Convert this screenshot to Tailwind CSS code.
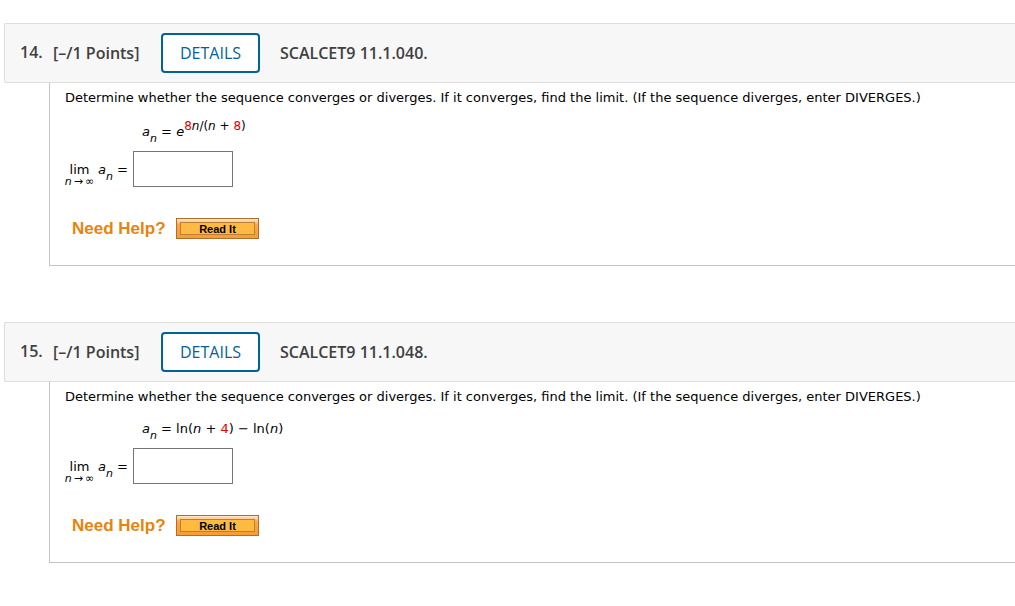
<!DOCTYPE html>
<html lang="en">
<head>
  <meta charset="UTF-8">
  <meta name="viewport" content="width=device-width, initial-scale=1.0">
  <title>Homework 11.1</title>
  <script src="https://cdn.jsdelivr.net/npm/@tailwindcss/browser@4"></script>
</head>
<body class="bg-white text-black font-['DejaVu_Sans',sans-serif] text-[13px] leading-5 pt-[23px] pl-1 flex flex-col gap-14 overflow-x-hidden">

  <!-- Question 14 -->
  <section>
    <header class="flex items-center h-[60px] pl-[15px] bg-[#f7f7f7] border border-r-0 border-[#dddddd] rounded-l-xs font-['Open_Sans',sans-serif] text-base font-semibold text-[#404040]">
      <span class="w-[33px] pb-0.5">14.</span>
      <span class="w-[108px]">[–/1 Points]</span>
      <button type="button" class="w-[99px] h-10 mr-5 bg-white border-2 border-[#006298] rounded text-[#006298] font-normal">DETAILS</button>
      <h2>SCALCET9 11.1.040.</h2>
    </header>

    <div class="ml-[45px] pl-[15px] pt-[5px] pb-[26px] border-l border-b border-[#c4c4c4]">
      <p>Determine whether the sequence converges or diverges. If it converges, find the limit. (If the sequence diverges, enter DIVERGES.)</p>

      <p class="pl-[77px] pt-3 pb-1"><i>a</i><span class="inline-block align-[-6px] leading-4 text-[11px] italic">n</span> = <i>e</i><span class="inline-block align-[6px] leading-3 text-xs"><span class="text-[#dd0000]">8</span><i>n</i>/(<i>n</i> + <span class="text-[#dd0000]">8</span>)</span></p>

      <div class="flex items-center h-9">
        <label for="answer14" class="flex items-center w-[68px] pt-1.5">
          <span class="flex flex-col items-center w-[29px] mr-1 pt-2 leading-3"><span>lim</span><span class="flex gap-0.5 text-[11px]"><i>n</i><span>→</span><span>∞</span></span></span>
          <span><i>a</i><span class="inline-block align-[-6px] leading-4 text-[11px] italic">n</span> =</span>
        </label>
        <input id="answer14" type="text" class="w-[100px] h-9 px-2 border border-[#767676]">
      </div>

      <div class="flex items-center mt-[31px] pl-[7px] font-['Liberation_Sans',sans-serif] font-bold">
        <span class="w-[104px] text-[17px] leading-5 text-[#e8830c]">Need Help?</span>
        <button type="button" class="w-[83px] h-[21px] p-[3px] border border-[#ae6f2a] bg-linear-to-b from-[#ffe8d2] via-[#ffa548] via-30% to-[#f99a35] text-[11px]">
          <span class="block h-full border border-[#bd8033] bg-[#ffba42] leading-3">Read It</span>
        </button>
      </div>
    </div>
  </section>

  <!-- Question 15 -->
  <section>
    <header class="flex items-center h-[60px] pl-[15px] bg-[#f7f7f7] border border-r-0 border-[#dddddd] rounded-l-xs font-['Open_Sans',sans-serif] text-base font-semibold text-[#404040]">
      <span class="w-[33px] pb-0.5">15.</span>
      <span class="w-[108px]">[–/1 Points]</span>
      <button type="button" class="w-[99px] h-10 mr-5 bg-white border-2 border-[#006298] rounded text-[#006298] font-normal">DETAILS</button>
      <h2>SCALCET9 11.1.048.</h2>
    </header>

    <div class="ml-[45px] pl-[15px] pt-[5px] pb-[26px] border-l border-b border-[#c4c4c4]">
      <p>Determine whether the sequence converges or diverges. If it converges, find the limit. (If the sequence diverges, enter DIVERGES.)</p>

      <p class="pl-[77px] pt-3 pb-1"><i>a</i><span class="inline-block align-[-6px] leading-4 text-[11px] italic">n</span> = ln(<i>n</i> + <span class="text-[#dd0000]">4</span>) − ln(<i>n</i>)</p>

      <div class="flex items-center h-9">
        <label for="answer15" class="flex items-center w-[68px] pt-1.5">
          <span class="flex flex-col items-center w-[29px] mr-1 pt-2 leading-3"><span>lim</span><span class="flex gap-0.5 text-[11px]"><i>n</i><span>→</span><span>∞</span></span></span>
          <span><i>a</i><span class="inline-block align-[-6px] leading-4 text-[11px] italic">n</span> =</span>
        </label>
        <input id="answer15" type="text" class="w-[100px] h-9 px-2 border border-[#767676]">
      </div>

      <div class="flex items-center mt-[31px] pl-[7px] font-['Liberation_Sans',sans-serif] font-bold">
        <span class="w-[104px] text-[17px] leading-5 text-[#e8830c]">Need Help?</span>
        <button type="button" class="w-[83px] h-[21px] p-[3px] border border-[#ae6f2a] bg-linear-to-b from-[#ffe8d2] via-[#ffa548] via-30% to-[#f99a35] text-[11px]">
          <span class="block h-full border border-[#bd8033] bg-[#ffba42] leading-3">Read It</span>
        </button>
      </div>
    </div>
  </section>

</body>
</html>
